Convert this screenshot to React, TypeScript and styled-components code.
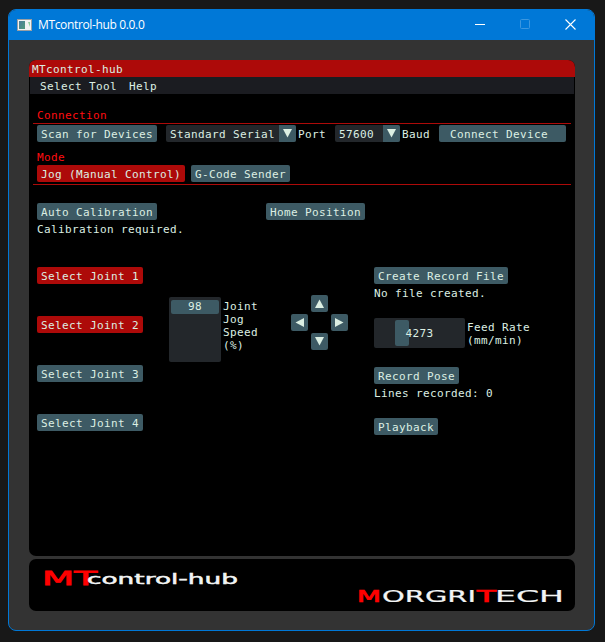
import React from "react";
import styled, { createGlobalStyle, css } from "styled-components";

const color = {
  desktop: "#181818",
  accent: "#0078d7",
  shell: "#333333",
  red: "#ad0a09",
  hotRed: "#ff0d10",
  slate: "#3d5a64",
  well: "#23272b",
  menu: "#1b1c21",
  text: "#dcefe3",
};

const GlobalStyle = createGlobalStyle`
  * { box-sizing: border-box; }
  body { margin: 0; background: ${color.desktop}; overflow: hidden; }
`;

const Desktop = styled.main`
  width: 605px;
  height: 642px;
  padding: 9px 10px 11px 8px;
  background: ${color.desktop};
`;

const Window = styled.section`
  height: 622px;
  display: flex;
  flex-direction: column;
  overflow: hidden;
  border: 1px solid ${color.accent};
  border-radius: 8px;
  background: ${color.shell};
`;

const TitleBar = styled.header`
  height: 30px;
  flex: none;
  display: flex;
  align-items: center;
  padding-left: 8px;
  background: ${color.accent};
  color: #fff;
`;

const AppTitle = styled.span`
  flex: 1;
  margin-left: 6px;
  font: 12px/16px "Open Sans", "Noto Sans", sans-serif;
  letter-spacing: -0.35px;
`;

const Controls = styled.div`
  display: flex;
  align-items: center;
  gap: 35px;
  padding: 0 18px 2px 0;
  svg { display: block; }
`;

const Body = styled.div`
  flex: 1;
  display: flex;
  flex-direction: column;
  gap: 3px;
  padding: 20px 19px 19px 20px;
  color: ${color.text};
  font: 11px/13px "DejaVu Sans Mono", monospace;
  letter-spacing: 0.378px;
  white-space: pre;
`;

const Panel = styled.div`
  height: 496px;
  flex: none;
  overflow: hidden;
  border-radius: 7px;
  background: #000;
`;

const PanelTitle = styled.div`
  height: 17px;
  padding: 3px 3px 1px;
  background: ${color.red};
`;

const MenuBar = styled.nav`
  height: 17px;
  display: flex;
  gap: 12px;
  margin: 0 1px;
  padding: 3px 10px 1px;
  background: ${color.menu};
`;

const Content = styled.div`
  padding: 15px 4px 0;
`;

const Heading = styled.div<{ $gap?: number }>`
  height: 14px;
  margin-top: ${(p) => p.$gap ?? 0}px;
  padding-left: 4px;
  color: ${color.hotRed};
`;

const Rule = styled.hr`
  height: 1px;
  margin: 0;
  border: 0;
  background: ${color.red};
`;

const Row = styled.div<{ $top?: number; $gap?: number }>`
  display: flex;
  align-items: flex-start;
  gap: ${(p) => p.$gap ?? 0}px;
  margin-top: ${(p) => p.$top ?? 0}px;
  padding-left: 4px;
`;

const CalibrationStatus = styled.div`
  width: 120px;
`;

const control = css`
  height: 17px;
  flex: none;
  border-radius: 2px;
`;

const Button = styled.button<{ $active?: boolean; $width?: number }>`
  ${control}
  display: block;
  width: ${(p) => (p.$width ? `${p.$width}px` : "auto")};
  padding: 3px 4px 1px;
  border: 0;
  background: ${(p) => (p.$active ? color.red : color.slate)};
  color: inherit;
  font: inherit;
  letter-spacing: inherit;
  white-space: pre;
`;

const Combo = styled.div<{ $width: number }>`
  ${control}
  display: flex;
  justify-content: space-between;
  width: ${(p) => p.$width}px;
  padding-left: 4px;
  background: ${color.well};
  > span:first-child { padding-top: 3px; }
`;

const ArrowBox = styled.span`
  ${control}
  width: 17px;
  display: grid;
  place-items: center;
  background: ${color.slate};
  svg { display: block; }
`;

const ComboArrow = styled(ArrowBox)`
  border-radius: 0 2px 2px 0;
`;

const FieldLabel = styled.span<{ $width: number }>`
  width: ${(p) => p.$width}px;
  flex: none;
  margin-left: 2px;
  padding-top: 3px;
`;

const Note = styled.div`
  height: 13px;
  margin-top: 3px;
`;

const Workspace = styled.div`
  display: grid;
  grid-template-columns: 132px 122px 83px 1fr;
  align-items: start;
  margin-top: 31px;
  padding-left: 4px;
`;

const Joints = styled.div`
  display: grid;
  justify-items: start;
  gap: 32px;
`;

const SpeedField = styled.div`
  display: flex;
  gap: 2px;
  margin-top: 30px;
`;

const SpeedTrack = styled.div`
  width: 52px;
  height: 65px;
  padding: 3px 2px;
  border-radius: 2px;
  background: ${color.well};
`;

const SpeedGrab = styled.div`
  height: 14px;
  border-radius: 2px;
  background: ${color.slate};
  text-align: center;
  line-height: 14px;
`;

const SliderLabel = styled.div`
  padding-top: 3px;
`;

const JogPad = styled.div`
  display: grid;
  grid-template-columns: 17px 17px 17px;
  grid-template-rows: 17px 17px 17px;
  gap: 2px 3px;
  margin-top: 28px;
  grid-template-areas: ". up ." "left . right" ". down .";
`;

const JogButton = styled(ArrowBox)<{ $area: string }>`
  grid-area: ${(p) => p.$area};
`;

const RecordColumn = styled.div`
  display: flex;
  flex-direction: column;
  align-items: flex-start;
`;

const FeedField = styled.div`
  display: flex;
  gap: 2px;
  margin: 18px 0 19px;
`;

const FeedTrack = styled.div`
  width: 91px;
  height: 30px;
  display: grid;
  align-items: center;
  padding: 2px 0;
  border-radius: 2px;
  background: ${color.well};
  > * { grid-area: 1 / 1; }
`;

const FeedGrab = styled.div`
  width: 14px;
  height: 26px;
  margin-left: 21px;
  border-radius: 2px;
  background: ${color.slate};
`;

const FeedValue = styled.span`
  text-align: center;
  padding-top: 1px;
`;

const PlaybackSlot = styled.div`
  margin-top: 18px;
`;

const BrandPanel = styled.footer`
  height: 52px;
  flex: none;
  border-radius: 7px;
  background: #000;
  svg { display: block; letter-spacing: 0; }
`;

const arrowPaths = {
  up: "M4.5 .5 9 9H0Z",
  down: "M0 0h9L4.5 8.5Z",
  left: "M.5 4.5 9 0v9Z",
  right: "M0 0 8.5 4.5 0 9Z",
};

type Direction = keyof typeof arrowPaths;

const Arrow = ({ dir }: { dir: Direction }) => (
  <svg width="9" height="9" viewBox="0 0 9 9" fill={color.text}>
    <path d={arrowPaths[dir]} />
  </svg>
);

const AppIcon = () => (
  <svg width="15" height="12" viewBox="0 0 15 12">
    <defs>
      <linearGradient id="screen" x1="0" y1="0" x2="1" y2="1">
        <stop offset="0" stopColor="#4a7d9c" />
        <stop offset="1" stopColor="#4f9a7c" />
      </linearGradient>
    </defs>
    <rect width="15" height="12" fill="#9a9fa3" />
    <rect x="1" y="1" width="13" height="10" fill="#f1f3f3" />
    <rect x="2" y="2" width="6" height="8" fill="url(#screen)" />
    <path d="M13 3v5l-2-5Z" fill="#8fd0a0" />
  </svg>
);

const Select = ({ value, width }: { value: string; width: number }) => (
  <Combo $width={width}>
    <span>{value}</span>
    <ComboArrow><Arrow dir="down" /></ComboArrow>
  </Combo>
);

type Part = { text: string; x: number; y: number; width: number; size: number; fill: string; edge: number };

const brandParts: Part[] = [
  { text: "MT", x: 13, y: 26, width: 55, size: 20, fill: "#ff0000", edge: 0.8 },
  { text: "control-hub", x: 58, y: 25, width: 151, size: 14, fill: "#f2f4f4", edge: 0.45 },
  { text: "M", x: 328, y: 43, width: 24, size: 15, fill: "#ff0000", edge: 0.7 },
  { text: "ORGRI", x: 353, y: 43, width: 94, size: 15, fill: "#f2f4f4", edge: 0.2 },
  { text: "T", x: 448, y: 43, width: 19, size: 15, fill: "#ff0000", edge: 0.7 },
  { text: "ECH", x: 466, y: 43, width: 69, size: 15, fill: "#f2f4f4", edge: 0.2 },
];

const Brand = () => (
  <svg width="546" height="52" viewBox="0 0 546 52" fontFamily="'DejaVu Sans', sans-serif">
    {brandParts.map((p) => (
      <text key={p.x} x={p.x} y={p.y} textLength={p.width} lengthAdjust="spacingAndGlyphs"
        fontSize={p.size} fill={p.fill} stroke={p.fill} strokeWidth={p.edge}>
        {p.text}
      </text>
    ))}
  </svg>
);

const joints = [
  { id: 1, active: true },
  { id: 2, active: true },
  { id: 3, active: false },
  { id: 4, active: false },
];

const directions: Direction[] = ["up", "left", "right", "down"];

export default function App() {
  return (
    <Desktop>
      <GlobalStyle />
      <Window>
        <TitleBar>
          <AppIcon />
          <AppTitle>MTcontrol-hub 0.0.0</AppTitle>
          <Controls>
            <svg width="10" height="10"><path d="M0 5.5h10" stroke="#fff" /></svg>
            <svg width="10" height="10"><rect x=".5" y=".5" width="9" height="9" rx="1" fill="none" stroke="#3b97e0" /></svg>
            <svg width="11" height="11"><path d="m.5.5 10 10m0-10-10 10" stroke="#fff" strokeWidth="1.1" /></svg>
          </Controls>
        </TitleBar>
        <Body>
          <Panel>
            <PanelTitle>MTcontrol-hub</PanelTitle>
            <MenuBar><span>Select Tool</span><span>Help</span></MenuBar>
            <Content>
              <Heading>Connection</Heading>
              <Rule />
              <Row $top={1}>
                <Button $width={120}>Scan for Devices</Button>
                <Row>
                  <FieldLabel $width={3} />
                  <Select value="Standard Serial" width={130} />
                  <FieldLabel $width={37}>Port</FieldLabel>
                  <Select value="57600" width={65} />
                  <FieldLabel $width={37}>Baud</FieldLabel>
                  <Button $width={127}>{"Connect Device "}</Button>
                </Row>
              </Row>
              <Heading $gap={9}>Mode</Heading>
              <Row $gap={6}>
                <Button $active $width={148}>Jog (Manual Control)</Button>
                <Button $width={99}>G-Code Sender</Button>
              </Row>
              <Row $top={2} />
              <Rule />
              <Row $top={18} $gap={109}>
                <CalibrationStatus>
                  <Button $width={120}>Auto Calibration</Button>
                  <Note>Calibration required.</Note>
                </CalibrationStatus>
                <Button $width={99}>Home Position</Button>
              </Row>
              <Workspace>
                <Joints>
                  {joints.map((j) => (
                    <Button key={j.id} $active={j.active} $width={106}>{`Select Joint ${j.id}`}</Button>
                  ))}
                </Joints>
                <SpeedField>
                  <SpeedTrack><SpeedGrab>98</SpeedGrab></SpeedTrack>
                  <SliderLabel>{"Joint\nJog\nSpeed\n(%)"}</SliderLabel>
                </SpeedField>
                <JogPad>
                  {directions.map((d) => (
                    <JogButton key={d} $area={d}><Arrow dir={d} /></JogButton>
                  ))}
                </JogPad>
                <RecordColumn>
                  <Button $width={134}>Create Record File</Button>
                  <Note>No file created.</Note>
                  <FeedField>
                    <FeedTrack><FeedGrab /><FeedValue>4273</FeedValue></FeedTrack>
                    <SliderLabel>{"Feed Rate\n(mm/min)"}</SliderLabel>
                  </FeedField>
                  <Button $width={85}>Record Pose</Button>
                  <Note>Lines recorded: 0</Note>
                  <PlaybackSlot><Button $width={64}>Playback</Button></PlaybackSlot>
                </RecordColumn>
              </Workspace>
            </Content>
          </Panel>
          <BrandPanel><Brand /></BrandPanel>
        </Body>
      </Window>
    </Desktop>
  );
}
